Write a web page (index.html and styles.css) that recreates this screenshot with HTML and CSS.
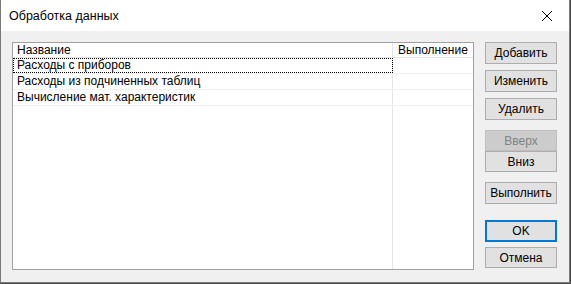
FILE: index.html
```html
<!DOCTYPE html>
<html lang="ru">
<head>
    <meta charset="UTF-8">
    <meta name="viewport" content="width=device-width, initial-scale=1.0">
    <title>Обработка данных</title>
    <link rel="stylesheet" href="styles.css">
</head>
<body>
    <div class="dialog">
        <div class="titleBar">
            <span class="titleText">Обработка данных</span>
            <svg class="closeIcon" width="12" height="12" viewBox="0 0 12 12">
                <path d="M1 1 L11 11 M11 1 L1 11" stroke="#000" stroke-width="1" fill="none"/>
            </svg>
        </div>
        <div class="dialogBody">
            <div class="listView">
                <div class="listRow listHead">
                    <div class="colName">Название</div>
                    <div class="colRun">Выполнение</div>
                </div>
                <div class="listRow">
                    <div class="colName focused">Расходы с приборов</div>
                    <div class="colRun"></div>
                </div>
                <div class="listRow">
                    <div class="colName">Расходы из подчиненных таблиц</div>
                    <div class="colRun"></div>
                </div>
                <div class="listRow">
                    <div class="colName">Вычисление мат. характеристик</div>
                    <div class="colRun"></div>
                </div>
                <div class="listRow listFill">
                    <div class="colName"></div>
                    <div class="colRun"></div>
                </div>
            </div>
            <div class="buttons">
                <button class="btn">Добавить</button>
                <button class="btn gap6">Изменить</button>
                <button class="btn gap6">Удалить</button>
                <button class="btn small gap10" disabled>Вверх</button>
                <button class="btn small">Вниз</button>
                <button class="btn gap10">Выполнить</button>
                <button class="btn default gap16">OK</button>
                <button class="btn small gap5">Отмена</button>
            </div>
        </div>
    </div>
</body>
</html>
```

FILE: styles.css
```css
html, body {
    margin: 0;
    padding: 0;
}

body {
    background-color: #4a4a4a;
    font-family: "Liberation Sans", Arial, sans-serif;
    font-size: 12px;
    color: #000000;
}

.dialog {
    width: 568px;
    height: 282px;
    border: 1px solid #7a7a7a;
    border-top: none;
    background-color: #f0f0f0;
    display: flex;
    flex-direction: column;
}

.titleBar {
    height: 31px;
    background-color: #ffffff;
    display: flex;
    align-items: center;
    padding: 0 16px 0 8px;
}

.titleText {
    flex: 1;
    font-size: 12.5px;
    padding-top: 1px;
}

.closeIcon {
    display: block;
}

.dialogBody {
    flex: 1;
    display: flex;
    padding: 11px 11px 12px 11px;
}

.listView {
    width: 460px;
    border: 1px solid #a0a0a0;
    background-color: #ffffff;
    display: flex;
    flex-direction: column;
}

.listRow {
    display: flex;
    height: 15px;
    line-height: 15px;
    border-bottom: 1px solid #f0f0f0;
}

.listHead {
    height: 14px;
    line-height: 14px;
    border-bottom: 1px solid #e5e5e5;
}

.listFill {
    flex: 1;
    border-bottom: none;
}

.colName {
    width: 375px;
    padding-left: 4px;
    border-right: 1px solid #e5e5e5;
    white-space: nowrap;
}

.colRun {
    flex: 1;
    padding-left: 5px;
}

.focused {
    outline: 1px dotted #000000;
    outline-offset: -1px;
}

.buttons {
    margin-left: 11px;
    width: 72px;
    display: flex;
    flex-direction: column;
}

.btn {
    appearance: none;
    margin: 0;
    padding: 0;
    width: 72px;
    height: 22px;
    border: 1px solid #adadad;
    background-color: #e1e1e1;
    font-family: "Liberation Sans", Arial, sans-serif;
    font-size: 12px;
    color: #000000;
}

.btn.small {
    height: 21px;
}

.btn:disabled {
    background-color: #cccccc;
    border-color: #bfbfbf;
    color: #838383;
}

.btn.default {
    border: 2px solid #0078d7;
}

.gap5 {
    margin-top: 5px;
}

.gap6 {
    margin-top: 6px;
}

.gap10 {
    margin-top: 10px;
}

.gap16 {
    margin-top: 16px;
}
```
